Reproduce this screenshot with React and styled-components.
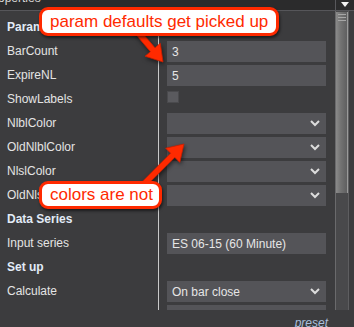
import React from "react";
import styled, { createGlobalStyle } from "styled-components";

const GlobalStyle = createGlobalStyle`
  html, body {
    margin: 0;
    padding: 0;
    background: #3c3c3e;
  }
  body {
    font-family: "Liberation Sans", Arial, sans-serif;
  }
`;

// Window frame
const Window = styled.div`
  position: relative;
  width: 354px;
  height: 327px;
  overflow: hidden;
  background: #3c3c3e;
  display: flex;
  flex-direction: column;
`;

const TitleBar = styled.div`
  height: 10px;
  flex: none;
  display: flex;
  background: #2b2b2c;
  border-bottom: 1px solid #56565a;
  overflow: hidden;
`;

const Title = styled.div`
  flex: 1;
  margin-top: -10px;
  margin-left: -14px;
  font-size: 12px;
  line-height: 16px;
  color: #d8d8d8;
`;

const TitleMenu = styled.div`
  width: 18px;
  border-left: 1px solid #58585c;
  display: flex;
  justify-content: center;
  padding-top: 2px;
`;

const Body = styled.div`
  height: 299px;
  flex: none;
  display: flex;
  overflow: hidden;
`;

const Grid = styled.div`
  flex: 1;
  padding: 4px 0 0 7px;
`;

const Row = styled.div`
  display: flex;
  height: 24px;
`;

const Label = styled.div`
  width: 151px;
  flex: none;
  border-right: 1px solid #c9c9c9;
  font-size: 12px;
  line-height: 24px;
  color: ${(p) => (p.$section ? "#e2ebf7" : "#e4e4e4")};
  font-weight: ${(p) => (p.$section ? "bold" : "normal")};
  white-space: nowrap;
  overflow: hidden;
`;

const Value = styled.div`
  padding-left: 8px;
  padding-top: 2px;
`;

const Field = styled.div`
  width: 159px;
  height: 21px;
  box-sizing: border-box;
  background: #545458;
  display: flex;
  align-items: center;
  justify-content: space-between;
  padding: 0 6px 0 5px;
  font-size: 12px;
  color: #e6e6e6;
`;

const Check = styled.div`
  margin-top: 2px;
  width: 12px;
  height: 12px;
  box-sizing: border-box;
  background: #5a5a5e;
  border: 1px solid #4a4a4d;
`;

const Scrollbar = styled.div`
  width: 14px;
  flex: none;
  margin-right: 5px;
  display: flex;
  flex-direction: column;
  background: #49494b;
  border-left: 1px solid #6a6a6c;
  border-right: 1px solid #5e5e60;
  box-sizing: border-box;
`;

const Thumb = styled.div`
  height: 179px;
  margin-top: 1px;
  background: linear-gradient(to right, #8a8a8a, #727272 45%, #5f5f60);
  border-right: 1px solid #9a9a9a;
  display: flex;
  flex-direction: column;
  align-items: center;
  gap: 2px;
  padding-top: 2px;
`;

const Grip = styled.div`
  width: 8px;
  height: 1px;
  background: #a6a6a6;
`;

const Footer = styled.div`
  flex: 1;
  display: flex;
  justify-content: flex-end;
  padding: 6px 26px 0 0;
`;

const Preset = styled.span`
  font-size: 12px;
  line-height: 14px;
  font-style: italic;
  color: #a9bfdc;
`;

// Annotation overlay
const Overlay = styled.svg`
  position: absolute;
  left: 0;
  top: 0;
  filter: drop-shadow(1px 2px 2px rgba(0, 0, 0, 0.55));
`;

const Callout = styled.div`
  position: absolute;
  left: ${(p) => p.$x}px;
  top: ${(p) => p.$y}px;
  width: ${(p) => p.$w}px;
  height: ${(p) => p.$h}px;
  box-sizing: border-box;
  background: #fff;
  border: 3px solid #ff2a00;
  border-radius: 9px;
  box-shadow: 1px 2px 3px rgba(0, 0, 0, 0.55);
  font-size: 17px;
  line-height: ${(p) => p.$h - 6}px;
  color: #ff2a00;
  padding-left: 8px;
  white-space: nowrap;
`;

const Chevron = () => (
  <svg width="10" height="7" viewBox="0 0 10 7">
    <polyline points="1,1 5,5 9,1" fill="none" stroke="#dcdcdc" strokeWidth="2" />
  </svg>
);

// arrow polygon from start to tip
const arrow = (x1, y1, x2, y2, shaft = 3, head = 10, headLen = 16) => {
  const dx = x2 - x1;
  const dy = y2 - y1;
  const len = Math.hypot(dx, dy);
  const ux = dx / len;
  const uy = dy / len;
  const nx = -uy;
  const ny = ux;
  const bx = x2 - ux * headLen;
  const by = y2 - uy * headLen;
  const pts = [
    [x1 + nx * shaft, y1 + ny * shaft],
    [bx + nx * shaft, by + ny * shaft],
    [bx + nx * head, by + ny * head],
    [x2, y2],
    [bx - nx * head, by - ny * head],
    [bx - nx * shaft, by - ny * shaft],
    [x1 - nx * shaft, y1 - ny * shaft],
  ];
  return pts.map((p) => p.map((v) => v.toFixed(1)).join(",")).join(" ");
};

const rows = [
  { label: "Parameters", section: true },
  { label: "BarCount", value: "3" },
  { label: "ExpireNL", value: "5" },
  { label: "ShowLabels", check: true },
  { label: "NlblColor", select: "" },
  { label: "OldNlblColor", select: "" },
  { label: "NlslColor", select: "" },
  { label: "OldNlslColor", select: "" },
  { label: "Data Series", section: true },
  { label: "Input series", value: "ES 06-15 (60 Minute)" },
  { label: "Set up", section: true },
  { label: "Calculate", select: "On bar close" },
  { label: "", value: "", id: "next" },
];

const App = () => {
  return (
    <Window>
      <GlobalStyle />
      <TitleBar>
        <Title>Properties</Title>
        <TitleMenu>
          <svg width="8" height="5" viewBox="0 0 8 5">
            <polygon points="0,0 8,0 4,5" fill="#f2f2f2" />
          </svg>
        </TitleMenu>
      </TitleBar>
      <Body>
        <Grid>
          {rows.map((r) => (
            <Row key={r.id || r.label}>
              <Label $section={r.section}>{r.label}</Label>
              {!r.section && (
                <Value>
                  {r.check ? (
                    <Check />
                  ) : (
                    <Field>
                      <span>{r.select !== undefined ? r.select : r.value}</span>
                      {r.select !== undefined && <Chevron />}
                    </Field>
                  )}
                </Value>
              )}
            </Row>
          ))}
        </Grid>
        <Scrollbar>
          <Thumb>
            <Grip />
            <Grip />
            <Grip />
          </Thumb>
        </Scrollbar>
      </Body>
      <Footer>
        <Preset>preset</Preset>
      </Footer>

      <Overlay width="354" height="327">
        <polygon points={arrow(136, 30, 163, 62)} fill="#ff2a00" stroke="#c81e00" strokeWidth="0.8" />
        <polygon points={arrow(138, 190, 184, 144)} fill="#ff2a00" stroke="#c81e00" strokeWidth="0.8" />
      </Overlay>
      <Callout $x={39} $y={7} $w={240} $h={29}>param defaults get picked up</Callout>
      <Callout $x={39} $y={181} $w={123} $h={28}>colors are not</Callout>
    </Window>
  );
};

export default App;
